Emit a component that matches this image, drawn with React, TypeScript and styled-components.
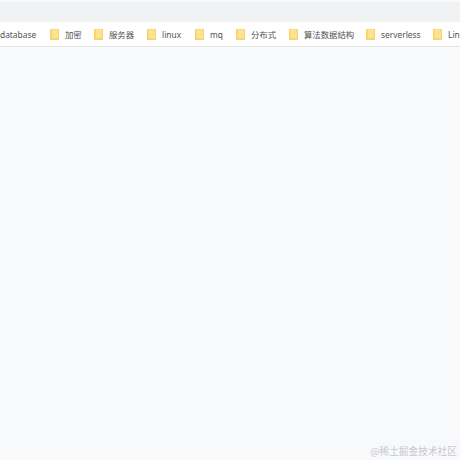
import React from "react";
import styled, { createGlobalStyle } from "styled-components";

const GlobalStyle = createGlobalStyle`
  html,
  body {
    margin: 0;
    padding: 0;
    background: #f8f9fb;
  }
`;

const Page = styled.div`
  position: relative;
  width: 460px;
  height: 460px;
  overflow: hidden;
  display: flex;
  flex-direction: column;
  background: #f8f9fb;
  font-family: "Noto Sans", "Noto Sans CJK SC", sans-serif;
`;

const TitleBar = styled.div`
  height: 20px;
  margin-top: 2px;
  background: #f1f2f4;
`;

const BookmarkBar = styled.div`
  height: 24px;
  display: flex;
  align-items: center;
  gap: 12px;
  background: #ffffff;
  border-bottom: 1px solid #e3e4e6;
  white-space: nowrap;
  overflow: hidden;
`;

const Bookmark = styled.div`
  display: flex;
  align-items: center;
  gap: 6px;
  flex: none;
`;

const Label = styled.span<{ $width: number }>`
  display: inline-block;
  flex: none;
  width: ${(p) => p.$width}px;
  padding-top: 2px;
  font-size: 8.4px;
  line-height: 22px;
  color: #505256;
`;

const Watermark = styled.div`
  position: absolute;
  right: 3px;
  bottom: 2px;
  font-family: "Noto Sans CJK SC", "Liberation Serif", serif;
  font-size: 9.7px;
  line-height: 14px;
  color: #c6c8cc;
`;

const Folder = () => (
  <svg width="9" height="11" viewBox="0 0 9 11">
    <rect x="0" y="0" width="9" height="11" rx="0.5" fill="#f7d35f" />
    <rect x="1.5" y="0.5" width="6.5" height="9" fill="#fbe394" />
  </svg>
);

const bookmarks = [
  { name: "加密", width: 17 },
  { name: "服务器", width: 26 },
  { name: "linux", width: 21 },
  { name: "mq", width: 14 },
  { name: "分布式", width: 26 },
  { name: "算法数据结构", width: 50 },
  { name: "serverless", width: 40 },
  { name: "Linux", width: 30 },
];

const App = () => {
  return (
    <Page>
      <GlobalStyle />
      <TitleBar />
      <BookmarkBar>
        <Label $width={38}>database</Label>
        {bookmarks.map((b) => (
          <Bookmark key={b.name}>
            <Folder />
            <Label $width={b.width}>{b.name}</Label>
          </Bookmark>
        ))}
      </BookmarkBar>
      <Watermark>@稀土掘金技术社区</Watermark>
    </Page>
  );
};

export default App;
